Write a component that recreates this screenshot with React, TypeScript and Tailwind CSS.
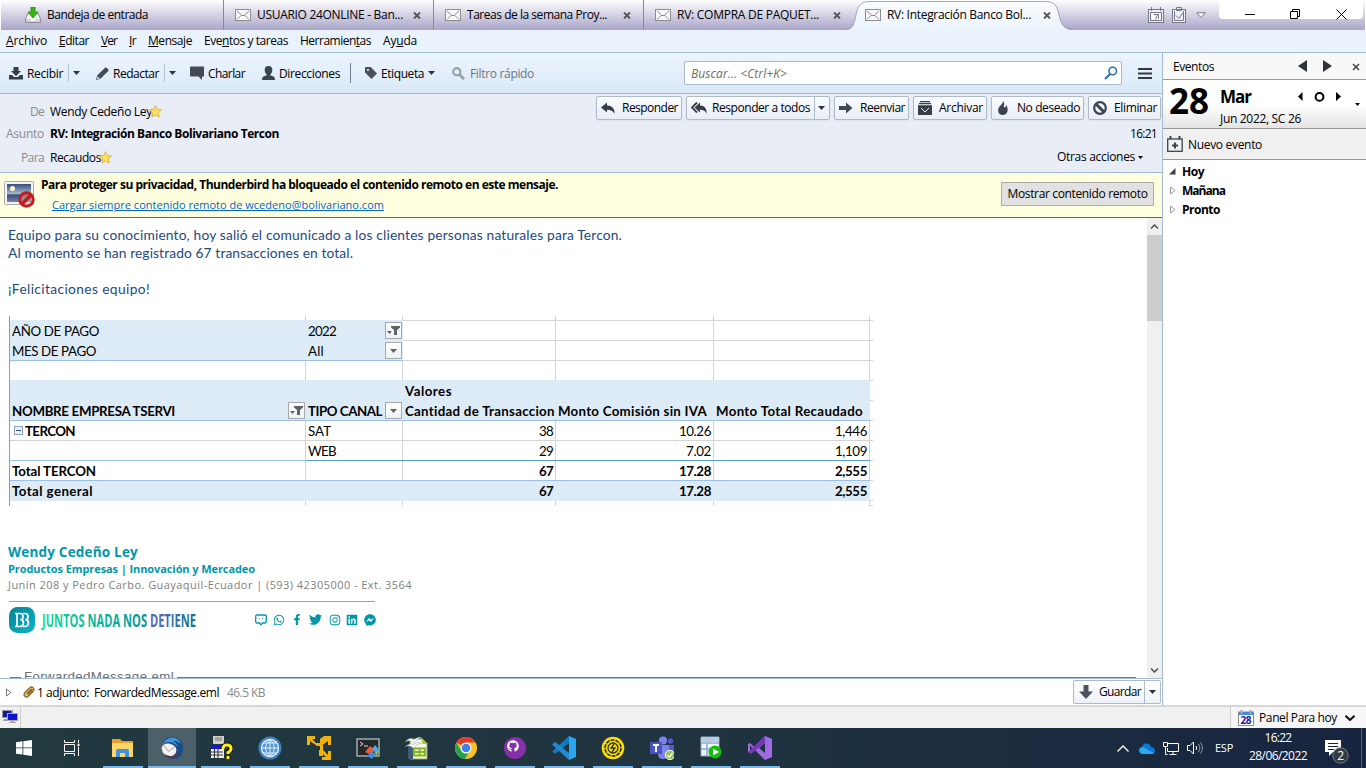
import React, { useLayoutEffect, useRef } from "react";
import {
  FaWhatsapp,
  FaFacebookF,
  FaTwitter,
  FaInstagram,
  FaLinkedin,
  FaFacebookMessenger,
  FaGithub,
} from "react-icons/fa";

/* A single line of text whose tracking is adjusted to fill a given width. */
function T({ w, c = "", children }: { w: number; c?: string; children: React.ReactNode }) {
  const ref = useRef<HTMLSpanElement>(null);
  useLayoutEffect(() => {
    const el = ref.current;
    if (!el) return;
    el.style.letterSpacing = "0px";
    const n = (el.textContent || "").length;
    el.style.letterSpacing = (w - el.getBoundingClientRect().width) / n + "px";
  }, [w]);
  return (
    <span className={`inline-block shrink-0 whitespace-nowrap ${c}`} style={{ width: w }}>
      <span ref={ref}>{children}</span>
    </span>
  );
}

function Caret({ c = "" }: { c?: string }) {
  return (
    <svg className={`h-1 w-[7px] shrink-0 ${c}`} viewBox="0 0 7 4">
      <path d="M0 0h7L3.500 4z" fill="#2b343c" />
    </svg>
  );
}

function Envelope({ c = "" }: { c?: string }) {
  return (
    <svg className={`h-3 w-4 shrink-0 ${c}`} viewBox="0 0 16 12">
      <rect x=".5" y=".5" width="15" height="11" fill="#f8f8f8" stroke="#8c8c8c" />
      <path d="M2 2l4.500 4M14 2l-4.500 4M2 10.500l4-4h4l4 4M6 6.500h4" fill="none" stroke="#8c8c8c" />
    </svg>
  );
}

function TabClose({ c = "" }: { c?: string }) {
  return (
    <svg className={`h-[7px] w-2 shrink-0 ${c}`} viewBox="0 0 8 7">
      <path d="M1 .5l6 6M7 .5l-6 6" stroke="#555" strokeWidth="1.900" />
    </svg>
  );
}

function Tab({ label, w, closeGap, c }: { label: string; w: number; closeGap: string; c: string }) {
  return (
    <div className={`flex h-[30px] shrink-0 items-center border-r border-[#8886a0] pl-[11px] ${c}`}>
      <Envelope />
      <T w={w} c="ml-1.5">{label}</T>
      <TabClose c={closeGap} />
    </div>
  );
}

function TabBar() {
  return (
    <div className="ml-px flex h-[30px] w-[1364px] items-center bg-linear-to-b from-white via-[#d3d1e3] to-[#aaa6ca]">
      <div className="flex h-[30px] w-[223px] shrink-0 items-center border-r border-[#8886a0] pl-6">
        <svg className="h-4 w-4" viewBox="0 0 16 16">
          <path d="M3 6L.5 12v3.500h15V12L13 6z" fill="#f3f3f3" stroke="#8b8b8b" />
          <path d="M1 12h4l1 2h4l1-2h4v3H1z" fill="#d4d4d4" />
          <path d="M6 0h4v5h3l-5 6-5-6h3z" fill="#35b712" stroke="#24860d" strokeWidth=".8" />
        </svg>
        <T w={101} c="ml-1.5">Bandeja de entrada</T>
      </div>
      <Tab c="w-[210px]" label="USUARIO 24ONLINE - Ban..." w={146} closeGap="ml-2.5" />
      <Tab c="w-[210px]" label="Tareas de la semana Proy..." w={140} closeGap="ml-4" />
      <div className="flex h-[30px] w-[210px] shrink-0 items-center pl-[11px]">
        <Envelope />
        <T w={142} c="ml-1.5">RV: COMPRA DE PAQUET...</T>
        <TabClose c="ml-3.5" />
      </div>
      <div className="relative flex h-[30px] w-[210px] shrink-0 items-center pl-[11px]">
        <svg className="absolute top-0 -left-2 h-[30px] w-[232px]" viewBox="0 0 232 30">
          <defs>
            <linearGradient id="tab" x1="0" y1="0" x2="0" y2="1">
              <stop offset="0" stopColor="#fafcff" />
              <stop offset="1" stopColor="#eaf3fc" />
            </linearGradient>
          </defs>
          <path d="M0 30C7 29 8 24 10 15C12 5 15 2 24 2H199C208 2 211 5 213 15C215 24 218 29 226 30z" fill="url(#tab)" />
          <path d="M0 29.500C7 29 8 24 10 15C12 5 15 1.500 24 1.500H199C208 1.500 211 5 213 15C215 24 218 29 226 29.500" fill="none" stroke="#8f92ad" strokeOpacity=".8" />
        </svg>
        <Envelope c="relative" />
        <T w={144} c="relative ml-1.5">RV: Integración Banco Bol...</T>
        <TabClose c="relative ml-3" />
      </div>
      <svg className="ml-[84px] h-4 w-4 shrink-0" viewBox="0 0 16 16" fill="none" stroke="#77778a">
        <rect x=".5" y="2.500" width="15" height="13" fill="#eeeef4" />
        <rect x="2.500" y="5.500" width="11" height="8" fill="#fff" />
        <path d="M3.500 0v4M12.500 0v4M5.500 7.500h4l-2 5M10.500 7v5" />
      </svg>
      <svg className="ml-2 h-4 w-4 shrink-0" viewBox="0 0 16 16" fill="none" stroke="#77778a">
        <rect x=".5" y="2.500" width="13" height="13" fill="#eeeef4" />
        <path d="M4.500.5h5v3h-5zM2.500 4v9.500h9V4M4 8.500l3 3 4-6" />
      </svg>
      <svg className="ml-2 h-[7px] w-2.5 shrink-0" viewBox="0 0 10 7">
        <path d="M.8.8h8.400L5 5.500z" fill="#fff" stroke="#77778a" />
      </svg>
      <div className="ml-[13px] flex h-[19px] w-[144px] shrink-0 items-center self-start rounded-b-sm bg-white">
        <svg className="mt-[9px] ml-[26px] h-[11px] w-[102px]" viewBox="0 0 102 11" fill="none" stroke="#000">
          <path d="M0 5.500h10M91.500.5l10 10M101.500.5l-10 10M45.500 2.500h7v7h-7zM47.500 2.500v-2h7v7h-2" />
        </svg>
      </div>
    </div>
  );
}

function MenuBar() {
  return (
    <div className="flex h-[23px] items-center gap-3 border-b border-[#a3bad5] bg-[#eaf3fc] pl-1.5">
      <T w={41}><u>A</u>rchivo</T>
      <T w={30}><u>E</u>ditar</T>
      <T w={16}><u>V</u>er</T>
      <T w={7}><u>I</u>r</T>
      <T w={44}><u>M</u>ensaje</T>
      <T w={84}>Eve<u>n</u>tos y tareas</T>
      <T w={71}>Herramien<u>t</u>as</T>
      <T w={34}>Ay<u>u</u>da</T>
    </div>
  );
}

function Toolbar() {
  return (
    <div className="flex h-[41px] items-center border-b border-[#a3bad5] bg-linear-to-b from-[#edf5fd] to-[#d9e8f7]">
      <svg className="ml-[9px] h-[13px] w-3.5 shrink-0" viewBox="0 0 14 13" fill="#343d46">
        <path d="M4.500 0h5v4H12L7 9 2 4h2.500zM0 8h3l2 2h4l2-2h3v4.500H0z" />
      </svg>
      <T w={36} c="mt-px ml-1">Recibir</T>
      <div className="ml-[5px] h-[18px] w-px bg-[#b3c4d6]" />
      <Caret c="ml-1" />
      <svg className="ml-4 h-[13px] w-[13px] shrink-0" viewBox="0 0 13 13">
        <path d="M0 13l1.200-4.500L9 .7c1-1 4.500 1.800 3.300 3.300L4.500 11.800z" fill="#414b55" />
        <path d="M1.500 9l2.500 2.500L.8 12.500z" fill="#bcc5ce" />
      </svg>
      <T w={46} c="mt-px ml-1">Redactar</T>
      <div className="ml-[5px] h-[18px] w-px bg-[#b3c4d6]" />
      <Caret c="ml-1" />
      <svg className="ml-3.5 h-3.5 w-3.5 shrink-0" viewBox="0 0 14 14">
        <path d="M1 .5h12q1 0 1 1v9h-2V14L8.500 10.500H1q-1 0-1-1v-8q0-1 1-1z" fill="#434c55" />
      </svg>
      <T w={37} c="mt-px ml-1">Charlar</T>
      <svg className="ml-[17px] h-3.5 w-[13px] shrink-0" viewBox="0 0 13 14">
        <path d="M6.500 0C9 0 10.500 1.600 10.300 4.200 10.200 6 9.500 7.500 8.500 8.300v1.200c2.500.6 4.500 1 4.500 4.500H0c0-3.500 2-3.900 4.500-4.500V8.300C3.500 7.500 2.800 6 2.700 4.200 2.500 1.600 4 0 6.500 0z" fill="#3b444d" />
      </svg>
      <T w={61} c="mt-px ml-1">Direcciones</T>
      <div className="ml-2.5 h-5 w-px bg-[#717f8e]" />
      <svg className="ml-3.5 h-3 w-3 shrink-0" viewBox="0 0 12 12">
        <path d="M.5 0h5.200L12 6.500 6.500 12 0 5.500V.5z" fill="#48525c" />
        <circle cx="3" cy="3" r="1.100" fill="#e8f1fa" />
      </svg>
      <T w={43} c="mt-px ml-1">Etiqueta</T>
      <Caret c="ml-1" />
      <svg className="ml-[17px] h-[13px] w-[13px] shrink-0" viewBox="0 0 13 13" fill="none" stroke="#99a0a8">
        <circle cx="4.800" cy="4.800" r="3.600" strokeWidth="2.200" />
        <path d="M7.500 7.500L12 12" strokeWidth="3" />
      </svg>
      <T w={64} c="mt-px ml-[5px] text-[#6d7680]">Filtro rápido</T>
      <div className="ml-[150px] flex h-6 w-[438px] shrink-0 items-center rounded-[2px] border border-[#a5b8cd] bg-white">
        <T w={96} c="mt-px ml-1.5 text-[#6d6d6d] italic">Buscar... &lt;Ctrl+K&gt;</T>
        <svg className="ml-[317px] h-3.5 w-3.5 shrink-0" viewBox="0 0 14 14" fill="none" stroke="#2f72b3">
          <circle cx="8.700" cy="5" r="3.800" strokeWidth="1.600" />
          <path d="M6 8L1 13" strokeWidth="2.200" />
        </svg>
      </div>
      <svg className="ml-4 h-[11px] w-3.5 shrink-0" viewBox="0 0 14 11">
        <path d="M0 1h14M0 5.500h14M0 10h14" stroke="#33383d" strokeWidth="2" />
      </svg>
    </div>
  );
}

function ActionButton({ c, icon, label, w }: { c: string; icon: React.ReactNode; label: string; w: number }) {
  return (
    <div className={`flex h-6 shrink-0 items-center justify-between rounded-[2px] border border-[#adbac9] bg-linear-to-b from-[#fafcfe] to-[#e9eef6] pr-[3px] pl-1 shadow-xs ${c}`}>
      {icon}
      <T w={w}>{label}</T>
    </div>
  );
}

const ic = "h-3.5 w-3.5 shrink-0";

function ReplyIcon() {
  return (
    <svg className={ic} viewBox="0 0 14 14">
      <path d="M0 6.500L6 1.500v3c5 0 8 3 7.500 8.500C12 10 10 8.800 6 8.800v2.700z" fill="#363f48" />
    </svg>
  );
}

function MessageHeader() {
  return (
    <div className="flex h-[79px] justify-between border-b border-[#a3bad5] bg-[#e8edf6]">
      <div className="flex flex-col">
        <div className="mt-[9px] flex h-[18px] items-center pl-[30px]">
          <T w={14} c="text-[#8b8b8b]">De</T>
          <T w={102} c="ml-1.5">Wendy Cedeño Ley</T>
          <Star c="-ml-[3px]" />
        </div>
        <div className="mt-1 flex h-[18px] items-center pl-1.5">
          <T w={38} c="text-[#8b8b8b]">Asunto</T>
          <T w={229} c="ml-1.5 font-bold">RV: Integración Banco Bolivariano Tercon</T>
        </div>
        <div className="mt-[6px] flex h-[18px] items-center pl-[21px]">
          <T w={23} c="text-[#8b8b8b]">Para</T>
          <T w={51} c="ml-1.5">Recaudos</T>
          <Star c="-ml-[2px]" />
        </div>
      </div>
      <div className="flex flex-col items-end">
        <div className="mt-0.5 flex gap-1 pr-px">
          <ActionButton c="w-[86px]" w={56} label="Responder" icon={<ReplyIcon />} />
          <div className="flex h-6 w-[144px] items-center rounded-[2px] border border-[#adbac9] bg-linear-to-b from-[#fafcfe] to-[#e9eef6] pl-1 shadow-xs">
            <svg className="h-3.5 w-4 shrink-0" viewBox="0 0 16 14" fill="#363f48">
              <path d="M3.500 6.500L9 1.500v3c4.500 0 7 3 6.700 8.500C14.500 10 12.500 8.800 9 8.800v2.700z" />
              <path d="M6 1.500L1 6.500l5 5" fill="none" stroke="#363f48" strokeWidth="1.800" />
            </svg>
            <T w={98} c="ml-[5px]">Responder a todos</T>
            <div className="ml-1 h-[22px] w-px bg-[#adbac9]" />
            <Caret c="ml-[3px]" />
          </div>
          <ActionButton c="w-[75px]" w={45} label="Reenviar" icon={
            <svg className={ic} viewBox="0 0 14 14"><path d="M0 5h7V1.500L13.500 7 7 12.500V9H0z" fill="#404952" /></svg>
          } />
          <ActionButton c="w-[74px]" w={44} label="Archivar" icon={
            <svg className={ic} viewBox="0 0 14 14" fill="#363f48">
              <path d="M2 0h10v1.200H2zM1 2h12v1.300H1zM0 4.300h14V14H0z" />
              <path d="M3 7l4 4 4-4" fill="none" stroke="#e8edf6" />
            </svg>
          } />
          <ActionButton c="w-[93px]" w={63} label="No deseado" icon={
            <svg className={ic} viewBox="0 0 14 14"><path d="M7 0C10 4 6 5 9 6.500 10 6 10 4.500 10 3.500 13 8 12 14 6.800 14 2 14 1 9 3.500 5.500 5 3.500 7 2.500 7 0z" fill="#3c454e" /></svg>
          } />
          <ActionButton c="w-[73px]" w={43} label="Eliminar" icon={
            <svg className={ic} viewBox="0 0 14 14" fill="none" stroke="#3c454e" strokeWidth="2.200"><circle cx="7" cy="7" r="5.800" /><path d="M3.500 3.500l7 7" strokeWidth="3" /></svg>
          } />
        </div>
        <div className="mt-[5px] flex h-[18px] items-center pr-[5px]">
          <T w={27}>16:21</T>
        </div>
        <div className="mt-[5px] flex h-[18px] items-center pr-[19px]">
          <T w={78}>Otras acciones</T>
          <svg className="ml-[3px] h-[3px] w-[5px]" viewBox="0 0 5 3"><path d="M0 0h5L2.500 3z" /></svg>
        </div>
      </div>
    </div>
  );
}

function Star({ c }: { c: string }) {
  return (
    <svg className={`mb-0.5 h-[13px] w-[13px] shrink-0 ${c}`} viewBox="0 0 13 13">
      <path d="M6.500.7l1.800 3.700 4.100.6-3 2.900.7 4.100-3.600-2-3.600 2 .7-4.100-3-2.900 4.100-.6z" fill="#ffdf5b" stroke="#d8a838" strokeWidth=".8" />
    </svg>
  );
}

function RemoteBar() {
  return (
    <div className="flex h-[45px] items-start border-b border-[#686868] bg-[#ffffdf]">
      <svg className="mt-2 ml-1 h-7 w-8 shrink-0" viewBox="0 0 32 28">
        <defs>
          <linearGradient id="sky" x1="0" y1="0" x2="0" y2="1">
            <stop offset="0" stopColor="#35507e" />
            <stop offset=".55" stopColor="#a8b8cf" />
            <stop offset=".6" stopColor="#3d4f74" />
            <stop offset="1" stopColor="#6e83ab" />
          </linearGradient>
        </defs>
        <rect x=".5" y=".5" width="29" height="23" rx="1" fill="#f4f4f4" stroke="#aaa" />
        <rect x="3" y="3" width="24" height="18" fill="url(#sky)" />
        <circle cx="8.500" cy="7.500" r="2.500" fill="#fff9c4" />
        <circle cx="22.500" cy="18.500" r="6.700" fill="#e9a2a0" fillOpacity=".5" stroke="#c41c1c" strokeWidth="3" />
        <path d="M18 23l9-9" stroke="#c41c1c" strokeWidth="3.500" />
      </svg>
      <div className="ml-[5px] flex flex-col">
        <T w={517} c="mt-1 h-4 leading-4 font-bold">Para proteger su privacidad, Thunderbird ha bloqueado el contenido remoto en este mensaje.</T>
        <T w={332} c="mt-1 ml-[11px] h-4 text-[11px] leading-4 text-[#0066cc] underline">Cargar siempre contenido remoto de wcedeno@bolivariano.com</T>
      </div>
      <div className="mt-[9px] mr-2 ml-auto flex h-6 w-[153px] items-center justify-center border border-[#adadad] bg-[#e1e1e1]">
        <T w={140}>Mostrar contenido remoto</T>
      </div>
    </div>
  );
}

function FilterButton({ active }: { active?: boolean }) {
  return (
    <span className="mr-px flex h-[17px] w-[17px] shrink-0 items-center justify-center border border-[#a5a9ae] bg-linear-to-b from-white to-[#eef0f3]">
      <svg className="h-[11px] w-[13px]" viewBox="0 0 13 11" fill="#5f6368">
        {active ? (
          <path d="M4 1h9v1.500L10 5v5H7V5L4 2.500zM0 6h5L2.500 9z" />
        ) : (
          <path d="M3 4h7L6.500 8z" />
        )}
      </svg>
    </span>
  );
}

const G = "border-[#d4d4d4]";
const B = "border-[#9bc2e6]";
const D = "border-[#5b9bd5]";
const F = "border-[#ddebf7]";

/* One sheet row: five cells plus the stub of the gridline past the last column. */
function Row({ cells, fills, bottoms, c = "h-5" }: { cells: React.ReactNode[]; fills: string; bottoms: string[]; c?: string }) {
  return (
    <div className={`grid grid-cols-[296px_97px_153px_158px_156px_3px] ${c}`}>
      {[0, 1, 2, 3, 4].map((i) => {
        const filled = fills[i] === "1";
        return (
          <div key={i} className={`flex border-r ${filled ? "border-r-[#ddebf7] bg-[#ddebf7]" : "border-r-[#d4d4d4]"}`}>
            <div className={`-mr-px flex min-w-0 flex-1 items-center border-b ${bottoms[i]} ${i > 1 ? "pr-[3px]" : ""} pl-0.5`}>
              {cells[i]}
            </div>
          </div>
        );
      })}
      <div className="border-b border-[#d4d4d4]" />
    </div>
  );
}

const n = (w: number, t: string, bold = "") => <T w={w} c={`ml-auto ${bold}`}>{t}</T>;

function Sheet() {
  return (
    <div className="mt-[18px] ml-[9px] w-[864px] border-l border-[#9a9a9a] font-['Lato'] text-[13.3px] leading-[18px] text-black">
      <Row c="h-[5px]" cells={[]} fills="00000" bottoms={[F, F, G, G, G]} />
      <Row cells={[<T w={87}>AÑO DE PAGO</T>, <><T w={28}>2022</T><span className="ml-auto"><FilterButton active /></span></>]} fills="11000" bottoms={[F, F, G, G, G]} />
      <Row cells={[<T w={84}>MES DE PAGO</T>, <><T w={16}>All</T><span className="ml-auto"><FilterButton /></span></>]} fills="11000" bottoms={[B, B, G, G, G]} />
      <Row cells={[]} fills="00000" bottoms={[F, F, F, F, F]} />
      <Row cells={[null, null, <T w={47} c="font-bold">Valores</T>]} fills="11111" bottoms={[F, F, F, F, F]} />
      <Row
        cells={[
          <><T w={163} c="font-bold">NOMBRE EMPRESA TSERVI</T><span className="ml-auto"><FilterButton active /></span></>,
          <><T w={74} c="font-bold">TIPO CANAL</T><span className="ml-auto"><FilterButton /></span></>,
          <T w={150} c="font-bold">Cantidad de Transaccion</T>,
          <T w={149} c="font-bold">Monto Comisión sin IVA</T>,
          <T w={147} c="font-bold">Monto Total Recaudado</T>,
        ]}
        fills="11111"
        bottoms={[B, B, B, B, B]}
      />
      <Row
        cells={[
          <>
            <svg className="mx-0.5 h-[9px] w-[9px] shrink-0" viewBox="0 0 9 9"><rect x=".5" y=".5" width="8" height="8" fill="#eaf0fa" stroke="#92a2bd" /><path d="M2 4.500h5" stroke="#34518c" /></svg>
            <T w={50} c="font-bold">TERCON</T>
          </>,
          <T w={23}>SAT</T>, n(14, "38"), n(32, "10.26"), n(32, "1,446"),
        ]}
        fills="00000"
        bottoms={[G, G, G, G, G]}
      />
      <Row cells={[null, <T w={28}>WEB</T>, n(14, "29"), n(25, "7.02"), n(32, "1,109")]} fills="00000" bottoms={[B, D, D, D, D]} />
      <Row cells={[<T w={84} c="font-bold">Total TERCON</T>, null, n(14, "67", "font-bold"), n(32, "17.28", "font-bold"), n(32, "2,555", "font-bold")]} fills="00000" bottoms={[B, B, B, B, B]} />
      <Row cells={[<T w={81} c="font-bold">Total general</T>, null, n(14, "67", "font-bold"), n(32, "17.28", "font-bold"), n(32, "2,555", "font-bold")]} fills="11111" bottoms={[F, F, F, F, F]} />
      <Row c="h-[5px]" cells={[]} fills="00000" bottoms={["border-transparent", "border-transparent", "border-transparent", "border-transparent", "border-transparent"]} />
    </div>
  );
}

function Signature() {
  return (
    <div className="mt-[37px] ml-2 flex flex-col font-['Open_Sans'] text-[#0097a9]">
      <T w={130} c="h-[18px] text-[13.5px] leading-[18px] font-bold">Wendy Cedeño Ley</T>
      <T w={247} c="h-4 text-[11px] leading-4 font-bold">Productos Empresas | Innovación y Mercadeo</T>
      <T w={404} c="h-[15px] text-[11px] leading-[15px] text-[#808080]">Junín 208 y Pedro Carbo. Guayaquil-Ecuador | (593) 42305000 - Ext. 3564</T>
      <div className="mt-[9px] ml-px h-px w-[366px] bg-[#30d3ad]" />
      <div className="mt-[5px] ml-px flex items-start">
        <svg className="h-[26px] w-[190px] shrink-0 overflow-visible" viewBox="0 0 190 26">
          <defs>
            <linearGradient id="slogan" x1="0" x2="1">
              <stop offset="0" stopColor="#12dc9c" />
              <stop offset=".69" stopColor="#0b9298" />
              <stop offset=".7" stopColor="#5a69ba" />
              <stop offset="1" stopColor="#14778f" />
            </linearGradient>
            <linearGradient id="bb" x1="0" x2="1" y1="0" y2="1">
              <stop offset="0" stopColor="#08838f" />
              <stop offset="1" stopColor="#0bb4cc" />
            </linearGradient>
          </defs>
          <rect width="26" height="26" rx="8.500" fill="url(#bb)" />
          <path d="M6 6.500h5c4 0 4 6 .5 6.200 4 .3 4 6.800-.5 6.800H6M8 7v12M14 6.500h2c4 0 4 6 .5 6.200 4 .3 4 6.800-.5 6.800h-2" fill="none" stroke="#fff" strokeWidth="1.700" />
          <text x="33" y="20" textLength="154" lengthAdjust="spacingAndGlyphs" fontFamily="Open Sans" fontWeight="700" fontSize="17.500" fill="url(#slogan)">JUNTOS NADA NOS DETIENE</text>
        </svg>
        <div className="mt-1.5 ml-14 flex items-center text-[12px]">
          <svg className="h-3 w-3" viewBox="0 0 12 12"><path d="M2 1h8q1.300 0 1.300 1.300v5Q11.300 9 10 9H7.500L6 10.700 4.500 9H2Q.7 9 .7 7.500v-5Q.7 1 2 1z" fill="none" stroke="#0097a9" strokeWidth="1.300" /><path d="M4 4.800h1M7 4.800h1" stroke="#0097a9" /></svg>
          <FaWhatsapp className="ml-1.5" />
          <FaFacebookF className="ml-1.5 h-[11px]" />
          <FaTwitter className="ml-1.5 text-[13px]" />
          <FaInstagram className="ml-[7px]" />
          <FaLinkedin className="ml-[5px]" />
          <FaFacebookMessenger className="ml-1.5" />
        </div>
      </div>
    </div>
  );
}

function MessageBody() {
  return (
    <div className="flex h-[460px] bg-white">
      <div className="flex h-[460px] w-[1147px] flex-col overflow-hidden">
        <div className="flex flex-col pt-2 pl-2 font-['Lato'] text-[13.8px] leading-[18px] text-[#1f497d]">
          <T w={614}>Equipo para su conocimiento, hoy salió el comunicado a los clientes personas naturales para Tercon.</T>
          <T w={345}>Al momento se han registrado 67 transacciones en total.</T>
          <T w={142} c="mt-[18px]">¡Felicitaciones equipo!</T>
        </div>
        <Sheet />
        <Signature />
        <div className="mt-9 ml-2.5 flex h-4 w-[1126px] shrink-0 font-['Liberation_Sans'] text-[13.3px] leading-4 text-[#6e6e6e]">
          <div className="mt-2 h-px w-[11px] bg-[#777]" />
          <T w={150} c="mx-[3px]">ForwardedMessage.eml</T>
          <div className="mt-2 h-px flex-1 bg-[#777]" />
        </div>
      </div>
      <div className="flex w-[15px] flex-col items-center bg-[#f0f0f0]">
        <svg className="mt-[6px] h-[5px] w-[9px]" viewBox="0 0 9 5"><path d="M1 4.500L4.500 1 8 4.500" fill="none" stroke="#505050" strokeWidth="1.500" /></svg>
        <div className="mt-1.5 h-[86px] w-full bg-[#cdcdcd]" />
        <svg className="mt-auto mb-[5px] h-[5px] w-[9px]" viewBox="0 0 9 5"><path d="M1 .5L4.500 4 8 .5" fill="none" stroke="#505050" strokeWidth="1.500" /></svg>
      </div>
    </div>
  );
}

function Attachments() {
  return (
    <div className="flex h-[27px] items-center border-t border-[#a3bad5] bg-white">
      <svg className="ml-1.5 h-[9px] w-1.5 shrink-0" viewBox="0 0 6 9"><path d="M.5 1v7L5 4.500z" fill="none" stroke="#777" /></svg>
      <svg className="ml-[11px] h-3 w-3 shrink-0" viewBox="0 0 12 12" fill="none" stroke="#8f6d25" strokeWidth="1.300">
        <path d="M2 6.500L6.500 2C9-.5 12.500 2.500 10 5.500L5.500 10C3 12.500-.5 9.500 2 6.500z" fill="#dcc185" />
        <path d="M4 7.500l4-4c1-.5 1.500.5 1 1l-4 4" />
      </svg>
      <T w={52} c="mt-px ml-[2px]">1 adjunto:</T>
      <T w={125} c="mt-px ml-[5px]">ForwardedMessage.eml</T>
      <T w={38} c="mt-px ml-2 text-[#8b8b8b]">46.5 KB</T>
      <div className="mr-px ml-auto flex h-6 w-[88px] items-center rounded-[2px] border border-[#adbac9] bg-linear-to-b from-white to-[#eef2f8] pl-[5px]">
        <svg className="h-3.5 w-3.5 shrink-0" viewBox="0 0 14 14"><path d="M4.500 0h5v6.500H14L7 14 0 6.500h4.500z" fill="#4a535c" /></svg>
        <T w={42} c="ml-1.5">Guardar</T>
        <div className="ml-[3px] h-[22px] w-px bg-[#adbac9]" />
        <Caret c="ml-1" />
      </div>
    </div>
  );
}

function EventsPane() {
  return (
    <div className="flex w-[204px] shrink-0 flex-col border-l border-[#a3bad5] bg-white">
      <div className="flex h-[27px] items-center border-b border-[#999] bg-[#f8f8f8] pl-2.5">
        <T w={41} c="mt-px">Eventos</T>
        <svg className="ml-[84px] h-3 w-[62px]" viewBox="0 0 62 12" fill="#2d3338">
          <path d="M9 0v12L0 6zM25 0v12l9-6z" />
          <path d="M55 4l6 6M61 4l-6 6" stroke="#444" strokeWidth="1.500" />
        </svg>
      </div>
      <div className="flex h-[49px] border-b border-[#999] bg-linear-to-b from-white from-50% to-[#e4e4e4]">
        <T w={40} c="mt-[5px] ml-1.5 text-[35px] leading-8 font-bold">28</T>
        <div className="ml-[11px] flex flex-col">
          <T w={31} c="mt-[7px] text-[17px] leading-5 font-bold">Mar</T>
          <T w={81} c="mt-[3px] leading-[18px]">Jun 2022, SC 26</T>
        </div>
        <svg className="mt-3 -ml-[3px] h-[18px] w-[66px] shrink-0" viewBox="0 0 66 18">
          <path d="M4.500 0v9L0 4.500zM38 0v9l5-4.500zM57 11h5l-2.500 3z" />
          <circle cx="21.500" cy="4.900" r="3.900" fill="none" stroke="#000" strokeWidth="2" />
        </svg>
      </div>
      <div className="flex h-[31px] items-center border-b border-[#999] bg-[#f0f0f0] pl-1">
        <svg className="h-4 w-4 shrink-0" viewBox="0 0 16 16" fill="none" stroke="#3b444d" strokeWidth="1.300">
          <rect x=".7" y="3" width="14.500" height="12.300" />
          <path d="M3.500 0v3M12.500 0v3M8 6.500v6M5 9.500h6" strokeWidth="2" />
        </svg>
        <T w={74} c="mt-px ml-[5px]">Nuevo evento</T>
      </div>
      <div className="mt-0.5 flex flex-col font-bold leading-[19px]">
        <div className="flex h-[19px] items-center pl-1.5">
          <svg className="h-[7px] w-[7px]" viewBox="0 0 7 7"><path d="M6.500 0v6.500H0z" fill="#404040" /></svg>
          <T w={22} c="ml-1.5">Hoy</T>
        </div>
        <div className="flex h-[19px] items-center pl-[7px]">
          <svg className="h-[9px] w-1.5" viewBox="0 0 6 9"><path d="M.5 1v7L5 4.500z" fill="none" stroke="#999" /></svg>
          <T w={43} c="ml-1.5">Mañana</T>
        </div>
        <div className="flex h-[19px] items-center pl-[7px]">
          <svg className="h-[9px] w-1.5" viewBox="0 0 6 9"><path d="M.5 1v7L5 4.500z" fill="none" stroke="#999" /></svg>
          <T w={38} c="ml-1.5">Pronto</T>
        </div>
      </div>
    </div>
  );
}

function StatusBar() {
  return (
    <div className="flex h-[23px] items-center border-t-2 border-[#d7d7d7] bg-[#f0f0f0]">
      <svg className="mb-0.5 ml-0.5 h-[15px] w-4 shrink-0" viewBox="0 0 16 15">
        <path d="M0 1h11v8H0zM2 10h5v2H1z" fill="#9a9a9a" />
        <path d="M1 2h8v6H1z" fill="#1119a8" />
        <path d="M5 4h11v8H5zM9 12h3v1h2v1H7v-1h2z" fill="#a8a8a8" />
        <path d="M6 5h9v6H6z" fill="#0c15d0" />
      </svg>
      <div className="ml-[2px] h-full w-px bg-[#d0d0d0]" />
      <div className="ml-auto flex h-full w-[136px] items-center border-l border-[#d0d0d0] bg-[#f6f6f6] pl-[7px]">
        <svg className="h-4 w-4 shrink-0" viewBox="0 0 16 16">
          <rect x=".5" y="2" width="15" height="13.500" fill="#fff" stroke="#8c8c8c" />
          <path d="M1 2h14v3H1z" fill="#3f8be0" />
          <path d="M3.500 0v4M12.500 0v4" stroke="#aaa" strokeWidth="2" />
          <text x="2.500" y="14" fontSize="10" fontWeight="700" fontFamily="Open Sans" textLength="11" fill="#1a1a9c">28</text>
        </svg>
        <T w={78} c="ml-[5px]">Panel Para hoy</T>
        <svg className="ml-2 h-1.5 w-2.5" viewBox="0 0 10 6"><path d="M.5.8L5 5 9.500.8" fill="none" stroke="#111" strokeWidth="2" /></svg>
      </div>
    </div>
  );
}

function TaskApp({ children, c = "ml-[9px]" }: { children: React.ReactNode; c?: string }) {
  return (
    <div className={`flex h-10 w-10 shrink-0 flex-col items-center border-b-2 border-[#76b9ed] pt-2 ${c}`}>
      <svg className="h-6 w-6" viewBox="0 0 24 24">{children}</svg>
    </div>
  );
}

function Taskbar() {
  return (
    <div className="flex h-10 bg-linear-to-r from-[#21393f] via-[#20343f] via-50% to-[#17243f] text-white">
      <svg className="mt-3 ml-4 h-4 w-4 shrink-0" viewBox="0 0 16 16" fill="#fff"><path d="M0 2.200L6.500 1.300v6.200H0zM7.300 1.200L16 0v7.500H7.300zM0 8.300h6.500v6.300L0 13.700zM7.300 8.300H16V16l-8.700-1.200z" /></svg>
      <svg className="mt-3 ml-8 h-4 w-4 shrink-0" viewBox="0 0 16 16" fill="none" stroke="#fff"><path d="M.5 0v2.500h10V0M.5 16v-2.500h10V16M.5 4.500h10v7H.5zM14.500 0v3M14.500 7v9" /><path d="M13.500 5h2" strokeWidth="2.500" /></svg>
      <TaskApp c="ml-[23px]">
        <path d="M1 3h8l2 2h11v14H1z" fill="#e5a02a" /><path d="M1 7h21v14H1z" fill="#fcd46c" /><path d="M5 21v-6q0-2 2-2h9q2 0 2 2v6h-4v-4H9v4z" fill="#3c93d8" />
      </TaskApp>
      <div className="ml-[5px] flex h-10 w-12 shrink-0 flex-col items-center border-b-2 border-[#76b9ed] bg-[#4b6068] pt-2">
        <svg className="h-6 w-6" viewBox="0 0 24 24">
          <path d="M3 6Q7 0 13 1 22 2 23.500 11 23 20 16 23 9 23.500 5 20z" fill="#1a4c8c" />
          <path d="M3 8Q6 2 12 1.500 19 2 21 8 17 4 13 5 17 7 18 11 14 6 9 6 5 6 3 9z" fill="#3f97d4" />
          <path d="M1.500 12Q3 7 9 7.500 16 9 16.500 14 16 19 12 20 6 20.500 3 17z" fill="#f3f1f0" />
          <path d="M4 9.500l4.500 6 6-4.500" fill="none" stroke="#a9a0a3" />
          <path d="M3 17q4 4 9 3 4-1 5-6 1 5-3 9-7 0-11-6z" fill="#54384e" />
        </svg>
      </div>
      <TaskApp c="ml-[5px]">
        <path d="M4 0h11v8H4z" fill="#d3d0c7" /><path d="M6 2h7M6 4h7" stroke="#777" /><path d="M2 9h14v4H2z" fill="#1516df" /><path d="M2 13h13v9H2z" fill="#eee" /><path d="M2 16h12M2 19h12M5.500 13v9M9 13v9" stroke="#333" />
        <path d="M14 13q0-4 4-4 4 0 4 3.500 0 2.500-3 4V18M19 20v3" fill="none" stroke="#111" strokeWidth="5" /><path d="M14 13q0-4 4-4 4 0 4 3.500 0 2.500-3 4V18M19 20v3" fill="none" stroke="#ffee08" strokeWidth="3" />
      </TaskApp>
      <TaskApp>
        <circle cx="12" cy="12" r="11.500" fill="#3f80c2" /><circle cx="12" cy="12" r="8.500" fill="#5293d1" stroke="#e6f2fc" strokeWidth="1.300" />
        <path d="M12 3v18M3 12h18M5 7h14M5 17h14M12 3Q3 12 12 21M12 3Q21 12 12 21" fill="none" stroke="#e6f2fc" />
      </TaskApp>
      <TaskApp>
        <path d="M0 0h8v3H5l4 4h4V3l4-3h7v9h-3V5l-7 5h-4L3 5v4H0zM13 9h3v5l5 5v-4h3v9h-9v-3h4l-6-6z" fill="#f1b20a" />
        <path d="M12 14h4v6h-4z" fill="#f1b20a" />
      </TaskApp>
      <TaskApp>
        <rect x="1" y="3" width="22" height="17" fill="#24292c" stroke="#a6abae" strokeWidth="1.500" /><path d="M4 6l3 2-3 2M8 10h4" fill="none" stroke="#ddd" />
        <path d="M14 10l5 4-4 5-6-3z" fill="#ef5b35" /><path d="M19 9l5 6-4 2-4-4z" fill="#4ca8e6" /><path d="M15 16l5 1-4 6-5-3z" fill="#3c8edc" /><path d="M19 16l4-1-3 6z" fill="#8ac449" />
      </TaskApp>
      <TaskApp>
        <path d="M5 3h12l5 5v15H5z" fill="#f2f4ee" stroke="#8fa55d" /><path d="M3 9h5v14H3z" fill="#3e5c73" /><path d="M17 2v6h6z" fill="#a9cc35" /><path d="M0 6Q5 0 9 4 13 0 17 2 12 2 9 7 5 3 0 6zM0 11q5-5 8-2 4-4 8-2-5 1-8 5-4-4-8-1z" fill="#fff" stroke="#8c989e" strokeWidth=".4" />
        <path d="M9 12.500h11v7H9zM14.500 12.500v7M9 16h11" fill="#fff" stroke="#83b513" strokeWidth="1.800" />
      </TaskApp>
      <TaskApp>
        <circle cx="12" cy="12" r="11" fill="#f8c520" /><path d="M12 12L2.500 6.500A11 11 0 0 1 21.500 6.500H12z" fill="#e53a2e" /><path d="M2.500 6.500A11 11 0 0 0 11 23l5-8.500L12 12 7.500 15z" fill="#29a34b" /><circle cx="12" cy="12" r="5.500" fill="#fff" /><circle cx="12" cy="12" r="4.300" fill="#3d82ee" />
      </TaskApp>
      <TaskApp>
        <circle cx="12" cy="12" r="11" fill="#8530a8" /><FaGithub x="4" y="4" width="16" height="16" color="#fff" />
      </TaskApp>
      <TaskApp>
        <path d="M17 0l7 3v18l-7 3z" fill="#2ba5ee" /><path d="M17 0v7L3 18l-3-2.500z" fill="#1478bc" /><path d="M17 24v-7L3 6 0 8.500z" fill="#1e8bd2" />
      </TaskApp>
      <TaskApp>
        <circle cx="12" cy="12" r="11.300" fill="#fbdc09" /><circle cx="12" cy="12" r="8" fill="none" stroke="#27322b" strokeWidth="1.600" strokeDasharray="4 1" /><circle cx="12" cy="12" r="5" fill="none" stroke="#27322b" strokeWidth="1.300" /><path d="M13 8l-3 4h4l-3 4" fill="none" stroke="#27322b" strokeWidth="1.300" />
      </TaskApp>
      <TaskApp>
        <circle cx="13" cy="4.500" r="4" fill="#7b83eb" /><circle cx="20.500" cy="5" r="2.700" fill="#5059c9" /><path d="M16 9h8v8q-2 4-7 3z" fill="#5059c9" /><path d="M8 9h11v9q-1 5-6 5t-5-5z" fill="#7b83eb" /><rect y="6" width="12" height="12" fill="#4b53bc" />
        <path d="M3 9h6M6 9v7" stroke="#fff" strokeWidth="1.800" /><circle cx="20" cy="19" r="4.700" fill="#92c353" stroke="#fff" /><path d="M17.500 19l2 2 3-4" fill="none" stroke="#fff" strokeWidth="1.300" />
      </TaskApp>
      <TaskApp>
        <path d="M2 1h18v19H2z" fill="#eef4fa" stroke="#8ea8c1" /><path d="M2 7h18M2 13h18M8 1v19" stroke="#8daccc" strokeWidth="1.500" /><path d="M2.500 1.500H19v5H2.500z" fill="#b6cce2" /><circle cx="16" cy="16" r="6.500" fill="#17bd0d" /><path d="M14 12.500v7l6-3.500z" fill="#fff" />
      </TaskApp>
      <TaskApp>
        <path d="M17 0l7 3v18l-7 3L6 13l-4 4-2-1V8l2-1 4 4zM17 7l-6 5 6 5zM2 9.500v5L4.500 12z" fill="#a169e2" fillRule="evenodd" /><path d="M17 0v7L3 18l-3-2z" fill="#713bb3" />
      </TaskApp>
      <svg className="mt-[17px] ml-auto h-[7px] w-3 shrink-0" viewBox="0 0 12 7"><path d="M.5 6.500L6 1l5.500 5.500" fill="none" stroke="#fff" strokeWidth="1.300" /></svg>
      <svg className="mt-[15px] ml-2.5 h-[11px] w-4 shrink-0" viewBox="0 0 16 11"><path d="M3 4Q4 0 8 .5q3 .2 4 3.500 4 .5 4 4-.5 3-3 3H3Q0 10 0 7.500 0 4 3 4z" fill="#0b79d6" /><path d="M3 11Q0 10 .5 6.500q1-3 4.500-2l5 3 5 2.500-2 1z" fill="#2ea8ee" /></svg>
      <svg className="mt-[14px] ml-2 h-[13px] w-4 shrink-0" viewBox="0 0 16 13" fill="none" stroke="#fff"><path d="M5 1.500h10.500v8H4.500V6M10 9.500v3M6.500 12.500h7M.5.5h4v4h-4zM2.500 4.500v8M2.500 12.500h2" /></svg>
      <svg className="mt-[13px] ml-2 h-3.5 w-4 shrink-0" viewBox="0 0 16 14" fill="none" stroke="#fff"><path d="M.5 4.500H3L6.500 1v12L3 9.500H.5z" /><path d="M9 5q1.500 2 0 4" /><path d="M11.500 3q3 4 0 8M13.500 1.500q4 5.500 0 11" stroke="#8c97a6" /></svg>
      <T w={18} c="mt-[11px] ml-3 h-[18px] text-[11px] leading-[18px]">ESP</T>
      <div className="ml-4 flex w-[58px] shrink-0 flex-col items-center pt-px">
        <T w={27} c="h-[18px] leading-[18px]">16:22</T>
        <T w={58} c="h-[18px] leading-[18px]">28/06/2022</T>
      </div>
      <svg className="mt-3 ml-[18px] h-[24px] w-[25px] shrink-0" viewBox="0 0 25 24">
        <path d="M0 0h16v12H8l-4 4v-4H0z" fill="#fff" /><path d="M3 3.500h10M3 6.500h10M3 9.500h6" stroke="#182440" />
        <circle cx="15.500" cy="15.500" r="7.700" fill="#343b43" stroke="#777e86" /><text x="12.300" y="19.700" fill="#fff" fontSize="12" fontFamily="Open Sans">2</text>
      </svg>
      <div className="ml-[11px] h-10 w-px shrink-0 bg-[#576174]" />
      <div className="w-1 shrink-0" />
    </div>
  );
}

export default function App() {
  return (
    <div className="h-[768px] w-[1366px] overflow-hidden bg-white font-['Open_Sans',sans-serif] text-[12px] leading-4 text-black">
      <TabBar />
      <MenuBar />
      <div className="flex h-[652px]">
        <div className="flex w-[1162px] shrink-0 flex-col">
          <Toolbar />
          <MessageHeader />
          <RemoteBar />
          <MessageBody />
          <Attachments />
        </div>
        <EventsPane />
      </div>
      <StatusBar />
      <Taskbar />
    </div>
  );
}
